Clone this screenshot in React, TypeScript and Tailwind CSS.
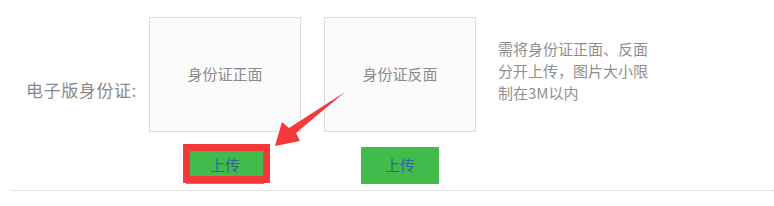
import React from "react";

const font = { fontFamily: '"Noto Sans CJK SC", "Liberation Sans", sans-serif' };

function UploadBox({ label }: { label: string }) {
  return (
    <div className="flex flex-col items-center">
      <div className="w-[152px] h-[115px] border border-[#dddddd] bg-[#fbfbfb] flex items-center justify-center text-[15px] text-[#8a8a8a]">
        {label}
      </div>
      <button className="mt-[15px] w-[78px] h-[37px] bg-[#41bb4b] text-[#3560b0] text-[15px] flex items-center justify-center">
        上传
      </button>
    </div>
  );
}

export default function App() {
  return (
    <div className="relative w-[774px] h-[206px] bg-white overflow-hidden" style={font}>
      <div className="flex pt-[17px]">
        <div className="w-[149px] pl-[26px] pt-[60px] text-[17px] leading-[26px] text-[#8a8a8a] tracking-[0.6px]">
          电子版身份证:
        </div>
        <div className="flex gap-[23px]">
          <UploadBox label="身份证正面" />
          <UploadBox label="身份证反面" />
        </div>
        <div className="ml-[22px] mt-[21px] w-[152px] text-[15px] leading-[22px] text-[#8f8f8f]">
          需将身份证正面、反面分开上传，图片大小限制在3M以内
        </div>
      </div>
      <div className="ml-[11px] mt-[6px] border-t border-dotted border-[#cccccc]" />

      {/* annotation: red frame + arrow */}
      <div className="absolute left-[183px] top-[144px] w-[87px] h-[39px] border-[7px] border-[#f5393a]" />
      <svg className="absolute left-0 top-0" width="774" height="206" viewBox="0 0 774 206">
        <polygon
          points="345,92 296,133 300,141 275,146 282,122 289,128"
          fill="#f5393a"
        />
      </svg>
    </div>
  );
}
